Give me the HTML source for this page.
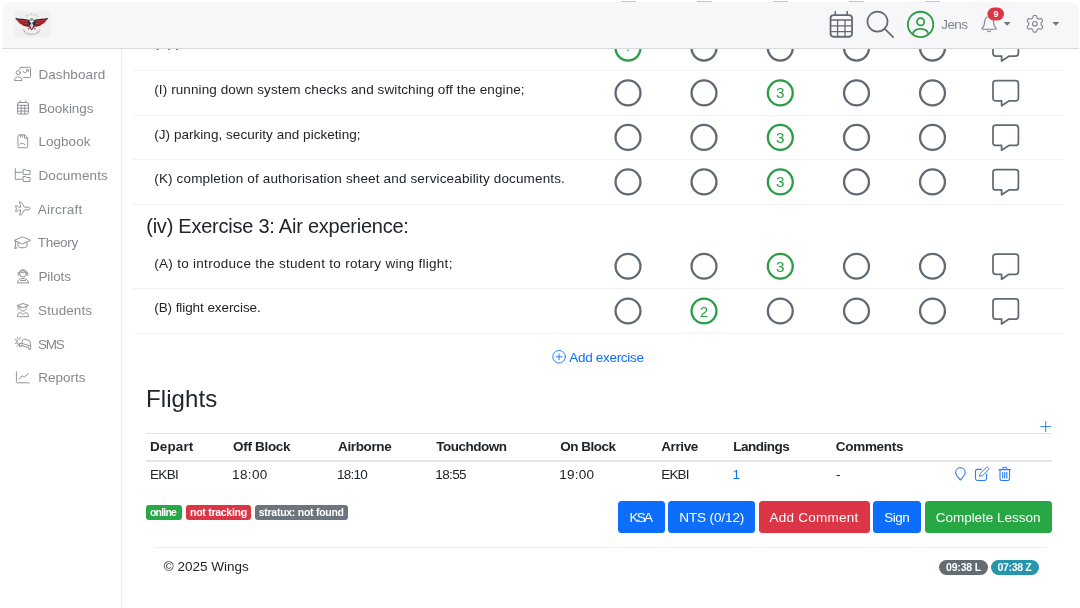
<!DOCTYPE html>
<html lang="en">
<head>
<meta charset="utf-8">
<title>Wings</title>
<style>
html,body{margin:0;padding:0;background:#fff;}
body{width:1080px;height:608px;position:relative;overflow:hidden;font-family:"Liberation Sans",sans-serif;}
.t{position:absolute;white-space:nowrap;display:block;}
.hl{position:absolute;left:133px;width:931px;height:1px;background:#f3f3f4;}
#content{position:absolute;left:0;top:0;width:1080px;height:608px;z-index:1;will-change:transform;}
#header{position:absolute;left:2px;top:2px;width:1077px;height:46px;background:#f7f7f9;border-bottom:1px solid #d8d9dc;border-radius:8px 8px 0 0;z-index:5;}
#hdr{position:absolute;left:0;top:0;width:1080px;height:60px;z-index:6;}
#sidebar{position:absolute;left:0;top:49px;width:121px;height:559px;border-right:1px solid #ededef;background:#fff;z-index:2;}
.btn{position:absolute;top:501px;height:32px;border-radius:3.5px;}
.bdg{position:absolute;top:504.5px;height:15px;border-radius:3px;}
.pill{position:absolute;top:560px;height:15px;border-radius:8px;}
svg{position:absolute;left:0;top:0;overflow:visible;}
svg text{font-family:"Liberation Sans",sans-serif;}
</style>
</head>
<body>
<div id="content">
<svg width="1080" height="608" viewBox="0 0 1080 608"><rect x="133" y="70.1" width="931" height="1" fill="#f2f2f4"/><rect x="133" y="114.8" width="931" height="1" fill="#f2f2f4"/><rect x="133" y="158.9" width="931" height="1" fill="#f2f2f4"/><rect x="133" y="204" width="931" height="1" fill="#f2f2f4"/><rect x="133" y="288" width="931" height="1" fill="#f2f2f4"/><rect x="133" y="332.8" width="931" height="1" fill="#f2f2f4"/></svg>

<svg width="1080" height="608" viewBox="0 0 1080 608">
<circle cx="628" cy="48.1" r="12.45" fill="none" stroke="#2a9d45" stroke-width="2.3"/>
<circle cx="704" cy="48.1" r="12.45" fill="none" stroke="#616a73" stroke-width="2.3"/>
<circle cx="780.3" cy="48.1" r="12.45" fill="none" stroke="#616a73" stroke-width="2.3"/>
<circle cx="856.5" cy="48.1" r="12.45" fill="none" stroke="#616a73" stroke-width="2.3"/>
<circle cx="932.5" cy="48.1" r="12.45" fill="none" stroke="#616a73" stroke-width="2.3"/>
<path d="M995.8 35.85 H1015.6000000000001 A2.8 2.8 0 0 1 1018.4000000000001 38.65 V53.35000000000001 A2.8 2.8 0 0 1 1015.6000000000001 56.150000000000006 H1008.9000000000001 L1001.6 61.0 V56.150000000000006 H995.8 A2.8 2.8 0 0 1 993.0 53.35000000000001 V38.65 A2.8 2.8 0 0 1 995.8 35.85 Z" fill="none" stroke="#616a73" stroke-width="1.75" stroke-linejoin="round"/>
<circle cx="628" cy="92.9" r="12.45" fill="none" stroke="#616a73" stroke-width="2.3"/>
<circle cx="704" cy="92.9" r="12.45" fill="none" stroke="#616a73" stroke-width="2.3"/>
<circle cx="780.3" cy="92.9" r="12.45" fill="none" stroke="#2a9d45" stroke-width="2.3"/><text x="780.3" y="98.4" text-anchor="middle" font-size="15.3" fill="#2a9d45">3</text>
<circle cx="856.5" cy="92.9" r="12.45" fill="none" stroke="#616a73" stroke-width="2.3"/>
<circle cx="932.5" cy="92.9" r="12.45" fill="none" stroke="#616a73" stroke-width="2.3"/>
<path d="M995.8 80.65 H1015.6000000000001 A2.8 2.8 0 0 1 1018.4000000000001 83.45 V98.15 A2.8 2.8 0 0 1 1015.6000000000001 100.95 H1008.9000000000001 L1001.6 105.80000000000001 V100.95 H995.8 A2.8 2.8 0 0 1 993.0 98.15 V83.45 A2.8 2.8 0 0 1 995.8 80.65 Z" fill="none" stroke="#616a73" stroke-width="1.75" stroke-linejoin="round"/>
<circle cx="628" cy="137.4" r="12.45" fill="none" stroke="#616a73" stroke-width="2.3"/>
<circle cx="704" cy="137.4" r="12.45" fill="none" stroke="#616a73" stroke-width="2.3"/>
<circle cx="780.3" cy="137.4" r="12.45" fill="none" stroke="#2a9d45" stroke-width="2.3"/><text x="780.3" y="142.9" text-anchor="middle" font-size="15.3" fill="#2a9d45">3</text>
<circle cx="856.5" cy="137.4" r="12.45" fill="none" stroke="#616a73" stroke-width="2.3"/>
<circle cx="932.5" cy="137.4" r="12.45" fill="none" stroke="#616a73" stroke-width="2.3"/>
<path d="M995.8 125.15 H1015.6000000000001 A2.8 2.8 0 0 1 1018.4000000000001 127.95 V142.65 A2.8 2.8 0 0 1 1015.6000000000001 145.45000000000002 H1008.9000000000001 L1001.6 150.3 V145.45000000000002 H995.8 A2.8 2.8 0 0 1 993.0 142.65 V127.95 A2.8 2.8 0 0 1 995.8 125.15 Z" fill="none" stroke="#616a73" stroke-width="1.75" stroke-linejoin="round"/>
<circle cx="628" cy="181.9" r="12.45" fill="none" stroke="#616a73" stroke-width="2.3"/>
<circle cx="704" cy="181.9" r="12.45" fill="none" stroke="#616a73" stroke-width="2.3"/>
<circle cx="780.3" cy="181.9" r="12.45" fill="none" stroke="#2a9d45" stroke-width="2.3"/><text x="780.3" y="187.4" text-anchor="middle" font-size="15.3" fill="#2a9d45">3</text>
<circle cx="856.5" cy="181.9" r="12.45" fill="none" stroke="#616a73" stroke-width="2.3"/>
<circle cx="932.5" cy="181.9" r="12.45" fill="none" stroke="#616a73" stroke-width="2.3"/>
<path d="M995.8 169.65 H1015.6000000000001 A2.8 2.8 0 0 1 1018.4000000000001 172.45000000000002 V187.15 A2.8 2.8 0 0 1 1015.6000000000001 189.95000000000002 H1008.9000000000001 L1001.6 194.8 V189.95000000000002 H995.8 A2.8 2.8 0 0 1 993.0 187.15 V172.45000000000002 A2.8 2.8 0 0 1 995.8 169.65 Z" fill="none" stroke="#616a73" stroke-width="1.75" stroke-linejoin="round"/>
<circle cx="628" cy="266.25" r="12.45" fill="none" stroke="#616a73" stroke-width="2.3"/>
<circle cx="704" cy="266.25" r="12.45" fill="none" stroke="#616a73" stroke-width="2.3"/>
<circle cx="780.3" cy="266.25" r="12.45" fill="none" stroke="#2a9d45" stroke-width="2.3"/><text x="780.3" y="271.75" text-anchor="middle" font-size="15.3" fill="#2a9d45">3</text>
<circle cx="856.5" cy="266.25" r="12.45" fill="none" stroke="#616a73" stroke-width="2.3"/>
<circle cx="932.5" cy="266.25" r="12.45" fill="none" stroke="#616a73" stroke-width="2.3"/>
<path d="M995.8 254.0 H1015.6000000000001 A2.8 2.8 0 0 1 1018.4000000000001 256.8 V271.5 A2.8 2.8 0 0 1 1015.6000000000001 274.3 H1008.9000000000001 L1001.6 279.15 V274.3 H995.8 A2.8 2.8 0 0 1 993.0 271.5 V256.8 A2.8 2.8 0 0 1 995.8 254.0 Z" fill="none" stroke="#616a73" stroke-width="1.75" stroke-linejoin="round"/>
<circle cx="628" cy="311" r="12.45" fill="none" stroke="#616a73" stroke-width="2.3"/>
<circle cx="704" cy="311" r="12.45" fill="none" stroke="#2a9d45" stroke-width="2.3"/><text x="704" y="316.5" text-anchor="middle" font-size="15.3" fill="#2a9d45">2</text>
<circle cx="780.3" cy="311" r="12.45" fill="none" stroke="#616a73" stroke-width="2.3"/>
<circle cx="856.5" cy="311" r="12.45" fill="none" stroke="#616a73" stroke-width="2.3"/>
<circle cx="932.5" cy="311" r="12.45" fill="none" stroke="#616a73" stroke-width="2.3"/>
<path d="M995.8 298.75 H1015.6000000000001 A2.8 2.8 0 0 1 1018.4000000000001 301.55 V316.25 A2.8 2.8 0 0 1 1015.6000000000001 319.05 H1008.9000000000001 L1001.6 323.9 V319.05 H995.8 A2.8 2.8 0 0 1 993.0 316.25 V301.55 A2.8 2.8 0 0 1 995.8 298.75 Z" fill="none" stroke="#616a73" stroke-width="1.75" stroke-linejoin="round"/>
<circle cx="628" cy="50.3" r="0.8" fill="#2a9d45"/>
</svg>
<svg width="1080" height="608" viewBox="0 0 1080 608" id="cicons" fill="none" stroke="#2b7cf7" stroke-linecap="round" stroke-linejoin="round">
<!-- add exercise -->
<circle cx="559.100" cy="356.800" r="6.300" stroke-width="1"/>
<path d="M556.100 356.800h6M559.100 353.800v6" stroke-width="1"/>
<!-- plus -->
<path d="M1040.600 426.600h10.200M1045.700 421.500v10.200" stroke-width="0.95"/>
<!-- pin -->
<path d="M960.400 480 C958 477.500 955.600 475 955.600 472.500 C955.600 469.800 957.700 467.800 960.400 467.800 C963.100 467.800 965.200 469.800 965.200 472.500 C965.200 475 962.800 477.500 960.400 480Z" stroke-width="1.100"/>
<!-- edit -->
<path d="M986.600 474v4.600 C986.600 479.700 985.800 480.500 984.700 480.500H977.400 C976.300 480.500 975.500 479.700 975.500 478.600V471.300 C975.500 470.200 976.300 469.400 977.400 469.400H981.500" stroke-width="1.100"/>
<path d="M980.300 473.500L986.300 467.500 C986.800 467 987.500 467 988 467.500L988.500 468 C989 468.500 989 469.200 988.500 469.700L982.500 475.700L979.800 476.200Z" stroke-width="1"/>
<!-- trash -->
<path d="M1000 470.300V478.800 C1000 479.800 1000.800 480.500 1001.700 480.500H1007.800 C1008.700 480.500 1009.500 479.800 1009.500 478.800V470.300M999 469.600H1010.500M1002.800 469.500V468.300 C1002.800 467.700 1003.200 467.300 1003.800 467.300H1005.700 C1006.300 467.300 1006.700 467.700 1006.700 468.300V469.500M1002.700 472.300v5.700M1004.750 472.300v5.700M1006.800 472.300v5.700" stroke-width="1.100"/>
</svg>

<div style="position:absolute;left:620.5px;top:1px;width:15px;height:1px;background:#c3c6ca"></div>
<div style="position:absolute;left:696.5px;top:1px;width:15px;height:1px;background:#a9d9b3"></div>
<div style="position:absolute;left:772.8px;top:1px;width:15px;height:1px;background:#c3c6ca"></div>
<div style="position:absolute;left:849.0px;top:1px;width:15px;height:1px;background:#c3c6ca"></div>
<div style="position:absolute;left:925.0px;top:1px;width:15px;height:1px;background:#c3c6ca"></div>
<!-- flights table lines -->
<div style="position:absolute;left:146px;top:433px;width:906px;height:1px;background:#dfe3e7"></div>
<div style="position:absolute;left:146px;top:460px;width:906px;height:2px;background:#e1e4e8"></div>
<div style="position:absolute;left:155px;top:547px;width:892px;height:1px;background:#eeeff0"></div>
<!-- buttons -->
<div class="btn" style="left:618px;width:46.5px;background:#0d6efd"></div>
<div class="btn" style="left:668px;width:87px;background:#0d6efd"></div>
<div class="btn" style="left:758.5px;width:111px;background:#dc3545"></div>
<div class="btn" style="left:873px;width:48.3px;background:#0d6efd"></div>
<div class="btn" style="left:924.5px;width:127px;background:#28a745"></div>
<!-- badges -->
<div class="bdg" style="left:145.75px;width:36.25px;background:#28a745"></div>
<div class="bdg" style="left:185.5px;width:65.75px;background:#dc3545"></div>
<div class="bdg" style="left:254.5px;width:93.75px;background:#6c757d"></div>
<div class="pill" style="left:939.25px;width:48.25px;background:#636b73"></div>
<div class="pill" style="left:990.5px;width:48.5px;background:#2596ab"></div>
<span class="t" style="left:154.25px;top:36px;font-size:13.5px;line-height:13.5px;font-weight:400;letter-spacing:-0.29px;color:#212529">(H) power checks;</span>
<span class="t" style="left:154.25px;top:83px;font-size:13.5px;line-height:13.5px;font-weight:400;letter-spacing:0.1px;color:#212529">(I) running down system checks and switching off the engine;</span>
<span class="t" style="left:154.25px;top:128px;font-size:13.5px;line-height:13.5px;font-weight:400;letter-spacing:0.04px;color:#212529">(J) parking, security and picketing;</span>
<span class="t" style="left:154.25px;top:172px;font-size:13.5px;line-height:13.5px;font-weight:400;letter-spacing:0.15px;color:#212529">(K) completion of authorisation sheet and serviceability documents.</span>
<span class="t" style="left:146.25px;top:216px;font-size:20px;line-height:20px;font-weight:400;letter-spacing:-0.24px;color:#212529">(iv) Exercise 3: Air experience:</span>
<span class="t" style="left:154.25px;top:257px;font-size:13.5px;line-height:13.5px;font-weight:400;letter-spacing:0.29px;color:#212529">(A) to introduce the student to rotary wing flight;</span>
<span class="t" style="left:154.25px;top:301px;font-size:13.5px;line-height:13.5px;font-weight:400;letter-spacing:-0.08px;color:#212529">(B) flight exercise.</span>
<span class="t" style="left:569.3px;top:351px;font-size:13.5px;line-height:13.5px;font-weight:400;letter-spacing:-0.31px;color:#0d6efd">Add exercise</span>
<span class="t" style="left:146px;top:387px;font-size:24px;line-height:24px;font-weight:400;letter-spacing:0.08px;color:#212529">Flights</span>
<span class="t" style="left:150px;top:440px;font-size:13.5px;line-height:13.5px;font-weight:700;letter-spacing:0.1px;color:#212529">Depart</span>
<span class="t" style="left:233px;top:440px;font-size:13.5px;line-height:13.5px;font-weight:700;letter-spacing:-0.31px;color:#212529">Off Block</span>
<span class="t" style="left:338px;top:440px;font-size:13.5px;line-height:13.5px;font-weight:700;letter-spacing:-0.36px;color:#212529">Airborne</span>
<span class="t" style="left:436.25px;top:440px;font-size:13.5px;line-height:13.5px;font-weight:700;letter-spacing:-0.5px;color:#212529">Touchdown</span>
<span class="t" style="left:560.25px;top:440px;font-size:13.5px;line-height:13.5px;font-weight:700;letter-spacing:-0.5px;color:#212529">On Block</span>
<span class="t" style="left:661.25px;top:440px;font-size:13.5px;line-height:13.5px;font-weight:700;letter-spacing:-0.4px;color:#212529">Arrive</span>
<span class="t" style="left:733.25px;top:440px;font-size:13.5px;line-height:13.5px;font-weight:700;letter-spacing:-0.5px;color:#212529">Landings</span>
<span class="t" style="left:835.75px;top:440px;font-size:13.5px;line-height:13.5px;font-weight:700;letter-spacing:-0.29px;color:#212529">Comments</span>
<span class="t" style="left:150px;top:468px;font-size:13.5px;line-height:13.5px;font-weight:400;letter-spacing:-0.67px;color:#212529">EKBI</span>
<span class="t" style="left:232px;top:468px;font-size:13.5px;line-height:13.5px;font-weight:400;letter-spacing:0.37px;color:#212529">18:00</span>
<span class="t" style="left:337px;top:468px;font-size:13.5px;line-height:13.5px;font-weight:400;letter-spacing:-0.75px;color:#212529">18:10</span>
<span class="t" style="left:435.25px;top:468px;font-size:13.5px;line-height:13.5px;font-weight:400;letter-spacing:-0.63px;color:#212529">18:55</span>
<span class="t" style="left:559.25px;top:468px;font-size:13.5px;line-height:13.5px;font-weight:400;letter-spacing:0.25px;color:#212529">19:00</span>
<span class="t" style="left:661.25px;top:468px;font-size:13.5px;line-height:13.5px;font-weight:400;letter-spacing:-0.83px;color:#212529">EKBI</span>
<span class="t" style="left:732.5px;top:468px;font-size:13.5px;line-height:13.5px;font-weight:400;letter-spacing:0px;color:#0d6efd">1</span>
<span class="t" style="left:836px;top:468px;font-size:13.5px;line-height:13.5px;font-weight:400;letter-spacing:0px;color:#212529">-</span>
<span class="t" style="left:629.5px;top:511px;font-size:13.5px;line-height:13.5px;font-weight:400;letter-spacing:-1.74px;color:#fff">KSA</span>
<span class="t" style="left:679.25px;top:511px;font-size:13.5px;line-height:13.5px;font-weight:400;letter-spacing:-0.11px;color:#fff">NTS (0/12)</span>
<span class="t" style="left:769.5px;top:511px;font-size:13.5px;line-height:13.5px;font-weight:400;letter-spacing:0.24px;color:#fff">Add Comment</span>
<span class="t" style="left:884.25px;top:511px;font-size:13.5px;line-height:13.5px;font-weight:400;letter-spacing:-0.5px;color:#fff">Sign</span>
<span class="t" style="left:935.75px;top:511px;font-size:13.5px;line-height:13.5px;font-weight:400;letter-spacing:-0.03px;color:#fff">Complete Lesson</span>
<span class="t" style="left:150px;top:507px;font-size:10.5px;line-height:10.5px;font-weight:700;letter-spacing:-0.8px;color:#fff">online</span>
<span class="t" style="left:190px;top:507px;font-size:10.5px;line-height:10.5px;font-weight:700;letter-spacing:-0.27px;color:#fff">not tracking</span>
<span class="t" style="left:258.75px;top:507px;font-size:10.5px;line-height:10.5px;font-weight:700;letter-spacing:-0.27px;color:#fff">stratux: not found</span>
<span class="t" style="left:946px;top:562px;font-size:10.5px;line-height:10.5px;font-weight:700;letter-spacing:-0.17px;color:#fff">09:38 L</span>
<span class="t" style="left:997.5px;top:562px;font-size:10.5px;line-height:10.5px;font-weight:700;letter-spacing:-0.34px;color:#fff">07:38 Z</span>
<span class="t" style="left:163.75px;top:560px;font-size:13.5px;line-height:13.5px;font-weight:400;letter-spacing:0.0px;color:#212529">© 2025 Wings</span>
</div>
<div id="sidebar"></div>
<div id="header"></div>
<div id="top" style="position:absolute;left:0;top:0;width:1080px;height:608px;z-index:7;pointer-events:none;will-change:transform">

<svg width="1080" height="608" viewBox="0 0 1080 608" id="icons">
<!-- logo -->
<rect x="14" y="11" width="36.5" height="26.5" fill="#f0f0f1"/>
<g id="logo">
<g stroke="#c4c4c8" stroke-width="0.7" fill="none">
<path d="M31.700 13.300v2.300M29.200 13.600l.5 2.200M34.200 13.600l-.5 2.200M26.900 14.500l1 2M36.500 14.500l-1 2M25 16l1.500 1.600M38.400 16l-1.500 1.600"/>
</g>
<path d="M31.700 13.300v1.200M27.100 14.900l.5 1M36.300 14.900l-.5 1" stroke="#e9a0a6" stroke-width="0.7" fill="none"/>
<!-- wings -->
<path d="M16 18.700 C19.500 19.700 25 19.500 29.200 20.700 L31 24 L28.600 27 C25.500 26.600 22.600 25.700 20.500 24.100 C18.300 22.500 16.800 20.700 16 18.700Z" fill="#d2343c"/>
<path d="M47.400 18.700 C43.900 19.700 38.400 19.500 34.200 20.700 L32.400 24 L34.800 27 C37.900 26.600 40.800 25.700 42.900 24.100 C45.100 22.500 46.600 20.700 47.400 18.700Z" fill="#d2343c"/>
<g stroke="#4a161b" stroke-width="0.8" fill="none" opacity="0.85">
<path d="M18.500 20.500 C21.500 21.800 25 22.300 28.500 22.600M20 22.600 C22.800 24 25.500 24.600 28.300 24.800M22.500 24.800 C24.500 25.600 26.500 26 28.400 26.200"/>
<path d="M44.900 20.500 C41.900 21.800 38.400 22.300 34.900 22.600M43.400 22.600 C40.600 24 37.900 24.600 35.100 24.800M40.900 24.800 C38.900 25.600 36.900 26 35 26.200"/>
</g>
<path d="M16 18.600 C19.500 19.500 25 19.300 29.300 20.500" fill="none" stroke="#2b2b33" stroke-width="1.100" stroke-linecap="round"/>
<path d="M47.400 18.600 C43.900 19.500 38.400 19.300 34.100 20.500" fill="none" stroke="#2b2b33" stroke-width="1.100" stroke-linecap="round"/>
<!-- head -->
<path d="M29.800 19.600 C30.200 17.800 33.200 17.800 33.600 19.600 L31.700 21Z" fill="#8d8f96"/>
<!-- body -->
<path d="M28.300 20.600 L31.700 23.200 L35.100 20.600 L36 22.600 L34 27.300 L31.700 30.400 L29.400 27.300 L27.400 22.600Z" fill="#33333b"/>
<path d="M31.700 22.300 L33.300 25.600 L31.700 29.300 L30.100 25.600Z" fill="#f3f3f4"/>
<path d="M31.700 23.200v5" stroke="#9a9aa0" stroke-width="0.500"/>
<path d="M29.600 27.800l-1.700 1.500M33.800 27.800l1.700 1.500" stroke="#a8343b" stroke-width="1.100"/>
<path d="M23.500 29.500 C25 36 38.400 36 39.900 29.500" fill="none" stroke="#a9a9ae" stroke-width="1.400" stroke-dasharray="1.100 0.700"/>
</g>
<!-- calendar -->
<g fill="none" stroke="#616a73" stroke-width="1.8">
<rect x="830.55" y="15.05" width="21.5" height="21.700" rx="3.200" fill="#fbfbfc"/>
<path d="M835.300 10.900v4M847.200 10.900v4" stroke-width="1.500"/>
<path d="M830.600 20h21.400M830.600 25.850h21.400M830.600 31.650h21.400M837.600 20v16.700M845 20v16.700" stroke-width="1.300"/>
</g>
<!-- search -->
<g fill="none" stroke="#616a73" stroke-width="1.650" stroke-linecap="round">
<circle cx="877.5" cy="21.600" r="10.050"/>
<path d="M884.800 28.900L893.200 37.200"/>
</g>
<!-- user -->
<g fill="none" stroke="#2a9d45" stroke-width="1.800">
<circle cx="920.55" cy="24.45" r="12.700"/>
<circle cx="920.600" cy="21.800" r="3.650" stroke-width="1.700"/>
<path d="M912.700 34.200 C914 27 927.200 27 928.500 34.200" stroke-width="1.700"/>
</g>
<!-- bell -->
<g fill="none" stroke="#7d838a" stroke-width="1.100" stroke-linejoin="round" stroke-linecap="round">
<path d="M989.100 16.800 C985.600 16.800 984.700 19.800 984.500 22.500 C984.300 25.500 983.600 27.200 982.100 28.300 C981.800 28.600 982 29.200 982.500 29.200 H995.700 C996.200 29.200 996.400 28.600 996.100 28.300 C994.600 27.200 993.900 25.500 993.700 22.500 C993.500 19.800 992.600 16.800 989.100 16.800Z"/>
<path d="M987.600 30.800 C988 32.100 990.200 32.100 990.600 30.800"/>
</g>
<rect x="987.400" y="7.500" width="16.600" height="13" rx="6.500" fill="#dc3545"/>
<path d="M1003.700 22.100h6.900l-3.450 3.600z" fill="#6c757d"/>
<path d="M1052.300 22.100h7.100l-3.550 3.600z" fill="#6c757d"/>
<!-- gear -->
<g fill="none" stroke="#7d838a" stroke-width="1.100" stroke-linejoin="round">
<circle cx="1034.900" cy="23.800" r="2.300"/>
<path d="M1041.03 23.80 L1041.03 23.48 L1041.03 23.16 L1041.08 22.82 L1041.33 22.43 L1041.90 21.92 L1042.44 21.35 L1042.59 20.85 L1042.52 20.41 L1042.35 20.00 L1042.15 19.61 L1041.92 19.24 L1041.64 18.90 L1041.30 18.62 L1040.79 18.49 L1040.03 18.67 L1039.30 18.92 L1038.84 18.93 L1038.52 18.81 L1038.24 18.66 L1037.96 18.49 L1037.69 18.33 L1037.41 18.17 L1037.14 17.95 L1036.93 17.55 L1036.78 16.80 L1036.55 16.04 L1036.19 15.66 L1035.77 15.51 L1035.34 15.45 L1034.90 15.43 L1034.46 15.45 L1034.03 15.51 L1033.61 15.66 L1033.25 16.04 L1033.02 16.80 L1032.87 17.55 L1032.66 17.95 L1032.39 18.17 L1032.11 18.33 L1031.84 18.49 L1031.56 18.66 L1031.28 18.81 L1030.96 18.93 L1030.50 18.92 L1029.77 18.67 L1029.01 18.49 L1028.50 18.62 L1028.16 18.90 L1027.88 19.24 L1027.65 19.61 L1027.45 20.00 L1027.28 20.41 L1027.21 20.85 L1027.36 21.35 L1027.90 21.92 L1028.47 22.43 L1028.72 22.82 L1028.77 23.16 L1028.77 23.48 L1028.77 23.80 L1028.77 24.12 L1028.77 24.44 L1028.72 24.78 L1028.47 25.17 L1027.90 25.68 L1027.36 26.25 L1027.21 26.75 L1027.28 27.19 L1027.45 27.60 L1027.65 27.99 L1027.88 28.36 L1028.16 28.70 L1028.50 28.98 L1029.01 29.11 L1029.77 28.93 L1030.50 28.68 L1030.96 28.67 L1031.28 28.79 L1031.56 28.94 L1031.84 29.11 L1032.11 29.27 L1032.39 29.43 L1032.66 29.65 L1032.87 30.05 L1033.02 30.80 L1033.25 31.56 L1033.61 31.94 L1034.03 32.09 L1034.46 32.15 L1034.90 32.17 L1035.34 32.15 L1035.77 32.09 L1036.19 31.94 L1036.55 31.56 L1036.78 30.80 L1036.93 30.05 L1037.14 29.65 L1037.41 29.43 L1037.69 29.27 L1037.96 29.11 L1038.24 28.94 L1038.52 28.79 L1038.84 28.67 L1039.30 28.68 L1040.03 28.93 L1040.79 29.11 L1041.30 28.98 L1041.64 28.70 L1041.92 28.36 L1042.15 27.99 L1042.35 27.60 L1042.52 27.19 L1042.59 26.75 L1042.44 26.25 L1041.90 25.68 L1041.33 25.17 L1041.08 24.78 L1041.03 24.44 L1041.03 24.12Z"/>
</g>
</svg>
<svg width="130" height="608" viewBox="0 0 130 608" id="sicons" fill="none" stroke="#8b8e92" stroke-width="0.95" stroke-linecap="round" stroke-linejoin="round">
<!-- dashboard -->
<circle cx="18.200" cy="72.700" r="2.100"/>
<path d="M14.500 80.200 C14.500 75.600 22 75.600 22 80.200Z"/>
<path d="M19.800 69.500V68.300 C19.800 67.700 20.300 67.300 20.800 67.300H29.500 C30.100 67.300 30.500 67.700 30.500 68.300V76.500 C30.500 77.100 30.100 77.500 29.500 77.500H23.500"/>
<path d="M22.800 71.300l2.200 1.700 3-3M26.300 69.800h2v2"/>
<!-- bookings -->
<rect x="17.500" y="102.500" width="11" height="11.500" rx="1.500"/>
<path d="M20.200 100.800v1.700M25.800 100.800v1.700M17.500 105.300h11M17.500 108.200h11M17.500 111.100h11M21.200 105.300v8.700M24.800 105.300v8.700"/>
<!-- logbook -->
<path d="M17.900 135.800 C17.900 135.200 18.300 134.900 18.800 134.900H24.600L27.700 138V146.700 C27.700 147.300 27.300 147.700 26.700 147.700H18.800 C18.300 147.700 17.900 147.300 17.900 146.700Z"/>
<path d="M24.400 135v3.200h3.200M20.500 135v2M22.200 135v2M20 144.300l1.300-1.500 1 1.200 1-.6 1.700 1.300"/>
<!-- documents -->
<path d="M15.300 168.600V179.300H22M15.300 172.300H22"/>
<path d="M23.500 169.500h2.200l.8 1h3.500v4h-6.500z"/>
<path d="M23.500 176.500h2.200l.8 1h3.500v4h-6.500z"/>
<!-- aircraft -->
<path d="M20.300 202.100 C21.300 202.100 21.800 202.700 22.300 203.600L24.600 207.200H28.300 C29.500 207.200 30 207.900 30 208.500 C30 209.200 29.500 209.900 28.300 209.900H24.600L22.300 213.500 C21.800 214.500 21.300 215 20.300 215H19.600L20.800 209.900H18.600L17.300 211.400H15.600L16.400 208.500L15.600 205.700H17.300L18.600 207.200H20.800L19.600 202.100Z"/>
<!-- theory -->
<path d="M14.500 240.300L22.500 236.800L30.600 240.300L22.500 243.800Z"/>
<path d="M18 242v4.200 C18 248.300 27 248.300 27 246.200V242M15.600 241v5.500M14.800 248l.8-1.500.8 1.500z"/>
<!-- pilots -->
<circle cx="23" cy="273.800" r="3.300"/>
<path d="M19 273.800 C19 268.300 27 268.300 27 273.800M18.300 272.500v3M27.700 272.500v3M20.800 272.300h4.400"/>
<path d="M17.500 282.500 C17.500 277 28.500 277 28.500 282.500ZM20.500 280.500h5"/>
<!-- students -->
<path d="M17.300 305.500L23 303.500L28.700 305.500L23 307.500ZM20 306.800v2 C20 311.800 26 311.800 26 308.800v-2M18 305.800v3.500"/>
<path d="M17.500 316.300 C17.500 312 21 311.800 23 314.500 C25 311.800 28.500 312 28.500 316.300Z"/>
<!-- sms -->
<path d="M21.500 343.500L23 339.600 C23.200 339 23.700 338.800 24.300 339L29.300 340.600 C29.900 340.800 30.200 341.300 30.200 341.900L30.700 345.500V349.300H28.800V347.800L21 345.300V346.600H19.500V343.500Z"/>
<path d="M22.500 343.600l7.800 2.300M22.600 345v.2M28.400 346.700v.2"/>
<path d="M15 339.500l1.800.8M17.300 337.300l.8 1.800M20.300 337.600l-.6 1.700M15.300 343.300l1.800-.5M17.300 346.300l1-1.500M17.300 340.500 C16.500 342 17 343.800 18.800 344.500"/>
<!-- reports -->
<path d="M16.400 371.800V381.500 C16.400 382.300 16.900 382.800 17.700 382.800H29.300"/>
<path d="M19 379.300l3.200-3.600 2 1.500 4.200-3.500"/>
</svg>

<span class="t" style="left:38.4px;top:68px;font-size:13.5px;line-height:13.5px;font-weight:400;letter-spacing:0.1px;color:#86898c">Dashboard</span>
<span class="t" style="left:38.4px;top:102px;font-size:13.5px;line-height:13.5px;font-weight:400;letter-spacing:-0.06px;color:#86898c">Bookings</span>
<span class="t" style="left:38.4px;top:135px;font-size:13.5px;line-height:13.5px;font-weight:400;letter-spacing:0.04px;color:#86898c">Logbook</span>
<span class="t" style="left:38.4px;top:169px;font-size:13.5px;line-height:13.5px;font-weight:400;letter-spacing:0.15px;color:#86898c">Documents</span>
<span class="t" style="left:37.8px;top:203px;font-size:13.5px;line-height:13.5px;font-weight:400;letter-spacing:0.23px;color:#86898c">Aircraft</span>
<span class="t" style="left:37.8px;top:236px;font-size:13.5px;line-height:13.5px;font-weight:400;letter-spacing:-0.32px;color:#86898c">Theory</span>
<span class="t" style="left:38.4px;top:270px;font-size:13.5px;line-height:13.5px;font-weight:400;letter-spacing:-0.08px;color:#86898c">Pilots</span>
<span class="t" style="left:38.1px;top:304px;font-size:13.5px;line-height:13.5px;font-weight:400;letter-spacing:0.09px;color:#86898c">Students</span>
<span class="t" style="left:38.0px;top:338px;font-size:13.5px;line-height:13.5px;font-weight:400;letter-spacing:-1.2px;color:#86898c">SMS</span>
<span class="t" style="left:38.3px;top:371px;font-size:13.5px;line-height:13.5px;font-weight:400;letter-spacing:0.0px;color:#86898c">Reports</span>
<span class="t" style="left:941.3px;top:18px;font-size:13.5px;line-height:13.5px;font-weight:400;letter-spacing:-0.6px;color:#80858b">Jens</span>
<span class="t" style="left:993.5px;top:10px;font-size:9px;line-height:9px;font-weight:700;letter-spacing:0px;color:#fff">9</span>
</div>
</body>
</html>
